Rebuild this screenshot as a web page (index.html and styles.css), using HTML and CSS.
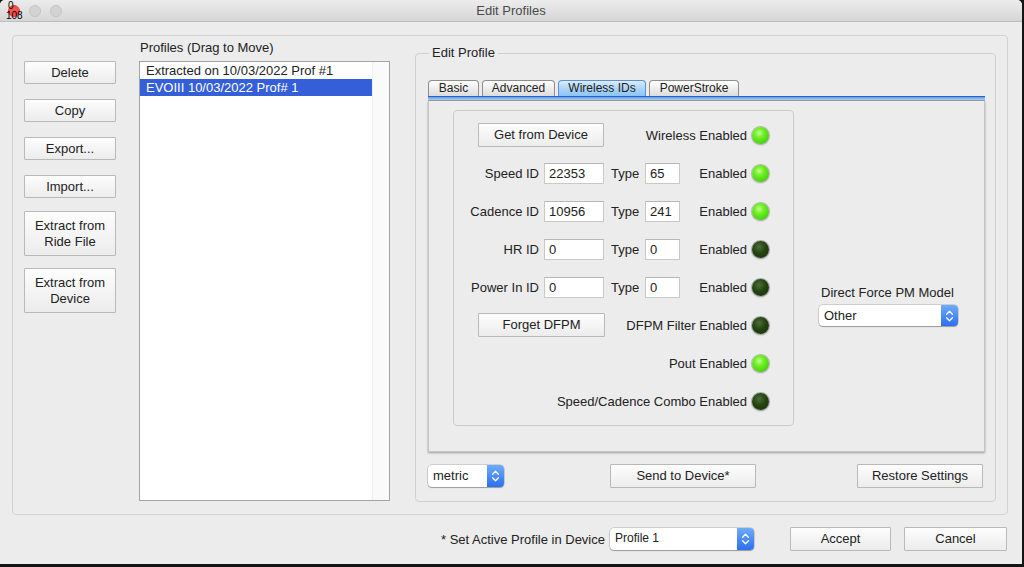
FILE: index.html
```html
<!DOCTYPE html>
<html>
<head>
<meta charset="utf-8">
<title>Edit Profiles</title>
<link rel="stylesheet" href="styles.css">
</head>
<body>
<div class="window">
  <div class="titlebar">
    <div class="lights">
      <span class="light red"></span>
      <span class="light"></span>
      <span class="light"></span>
    </div>
    <div class="title">Edit Profiles</div>
    <div></div>
    <span class="dbg dbg1">0</span>
    <span class="dbg dbg2">108</span>
  </div>
  <div class="content">
    <div class="outer-group">
      <div class="left-col">
        <button class="btn side">Delete</button>
        <button class="btn side">Copy</button>
        <button class="btn side">Export...</button>
        <button class="btn side">Import...</button>
        <button class="btn side tall ride">Extract from<br>Ride File</button>
        <button class="btn side tall dev">Extract from<br>Device</button>
      </div>
      <div class="profiles">
        <div class="profiles-label">Profiles (Drag to Move)</div>
        <div class="list">
          <div class="list-items">
            <div class="item">Extracted on 10/03/2022 Prof #1</div>
            <div class="item selected">EVOIII 10/03/2022 Prof# 1</div>
          </div>
          <div class="scrolltrack"></div>
        </div>
      </div>
      <fieldset class="edit-group">
        <legend>Edit Profile</legend>
        <div class="tabs">
          <div class="tab t-basic">Basic</div>
          <div class="tab t-adv">Advanced</div>
          <div class="tab t-wir active">Wireless IDs</div>
          <div class="tab t-pow">PowerStroke</div>
        </div>
        <div class="tabbar"></div>
        <div class="panel">
          <div class="inner-group">
            <button class="btn wide span12">Get from Device</button>
            <div class="lbl span35">Wireless Enabled</div>
            <span class="led on"></span>

            <div class="lbl">Speed ID</div>
            <div class="field">22353</div>
            <div class="type">Type</div>
            <div class="field">65</div>
            <div class="lbl">Enabled</div>
            <span class="led on"></span>

            <div class="lbl">Cadence ID</div>
            <div class="field">10956</div>
            <div class="type">Type</div>
            <div class="field">241</div>
            <div class="lbl">Enabled</div>
            <span class="led on"></span>

            <div class="lbl">HR ID</div>
            <div class="field">0</div>
            <div class="type">Type</div>
            <div class="field">0</div>
            <div class="lbl">Enabled</div>
            <span class="led off"></span>

            <div class="lbl">Power In ID</div>
            <div class="field">0</div>
            <div class="type">Type</div>
            <div class="field">0</div>
            <div class="lbl">Enabled</div>
            <span class="led off"></span>

            <button class="btn wide span12 forget">Forget DFPM</button>
            <div class="lbl span35">DFPM Filter Enabled</div>
            <span class="led off"></span>

            <div class="lbl span15">Pout Enabled</div>
            <span class="led on"></span>

            <div class="lbl span15">Speed/Cadence Combo Enabled</div>
            <span class="led off"></span>
          </div>
          <div class="dfpm">
            <div class="dfpm-label">Direct Force PM Model</div>
            <div class="popup p-other">
              <span class="popup-text">Other</span>
              <span class="popup-arrows"><svg width="9" height="14" viewBox="0 0 9 14"><path d="M1.6 5.2 L4.5 2.3 L7.4 5.2 M1.6 8.8 L4.5 11.7 L7.4 8.8" stroke="#fff" stroke-width="1.3" fill="none" stroke-linecap="round" stroke-linejoin="round"/></svg></span>
            </div>
          </div>
        </div>
        <div class="edit-bottom">
          <div class="popup p-metric">
            <span class="popup-text">metric</span>
            <span class="popup-arrows"><svg width="9" height="14" viewBox="0 0 9 14"><path d="M1.6 5.2 L4.5 2.3 L7.4 5.2 M1.6 8.8 L4.5 11.7 L7.4 8.8" stroke="#fff" stroke-width="1.3" fill="none" stroke-linecap="round" stroke-linejoin="round"/></svg></span>
          </div>
          <button class="btn send">Send to Device*</button>
          <button class="btn restore">Restore Settings</button>
        </div>
      </fieldset>
    </div>
    <div class="footer">
      <span class="footer-label">* Set Active Profile in Device</span>
      <div class="popup p-profile">
        <span class="popup-text">Profile 1</span>
        <span class="popup-arrows"><svg width="9" height="14" viewBox="0 0 9 14"><path d="M1.6 5.2 L4.5 2.3 L7.4 5.2 M1.6 8.8 L4.5 11.7 L7.4 8.8" stroke="#fff" stroke-width="1.3" fill="none" stroke-linecap="round" stroke-linejoin="round"/></svg></span>
      </div>
      <button class="btn accept">Accept</button>
      <button class="btn cancel">Cancel</button>
    </div>
  </div>
</div>
</body>
</html>
```
FILE: styles.css
```css
* { box-sizing: border-box; }
html, body { margin: 0; height: 100%; }
body {
  background: #141414;
  font-family: "Liberation Sans", Arial, sans-serif;
  font-size: 13px;
  color: #222;
}
.window {
  width: 1022px;
  height: 564px;
  background: #ececec;
  border-radius: 5px 5px 0 0;
  overflow: hidden;
  display: flex;
  flex-direction: column;
}
.titlebar {
  height: 22px;
  flex: none;
  background: linear-gradient(#ececec, #d6d6d6);
  border-bottom: 1px solid #bcbcbc;
  display: grid;
  grid-template-columns: 1fr auto 1fr;
  align-items: center;
  position: relative;
}
.lights { display: flex; gap: 9px; padding-left: 8px; }
.light {
  width: 12px; height: 12px; border-radius: 50%;
  background: #d3d3d3;
  border: 1px solid #c4c4c4;
}
.light.red { background: #f9524c; border-color: #e0443e; }
.title { color: #4a4a4a; font-size: 13px; }
.dbg { position: absolute; font-size: 10px; line-height: 10px; color: #000; }
.dbg1 { left: 8px; top: 1px; }
.dbg2 { left: 6px; top: 11px; }

.content { padding: 13px 15px 0 12px; flex: 1; }
.outer-group {
  width: 996px;
  height: 480px;
  border: 1px solid #d2d2d2;
  border-radius: 4px;
  display: flex;
  align-items: flex-start;
}
.btn {
  font-family: inherit;
  font-size: 13px;
  color: #222;
  height: 23px;
  padding: 0;
  border: 1px solid #b9b9b9;
  border-radius: 1px;
  background: linear-gradient(#fdfdfd, #ececec);
  line-height: 16px;
}
.left-col {
  margin-left: 11px;
  padding-top: 25px;
  display: flex;
  flex-direction: column;
  gap: 15px;
  width: 92px;
}
.side { width: 92px; }
.tall { height: 45px; }
.ride { margin-top: -2px; }
.dev { margin-top: -3px; }

.profiles { margin-left: 23px; padding-top: 4px; }
.profiles-label { height: 16px; line-height: 16px; margin-left: 1px; margin-bottom: 5px; }
.list {
  width: 251px;
  height: 440px;
  border: 1px solid #a3a3a3;
  background: #fff;
  display: flex;
}
.list-items { flex: 1; }
.item { height: 17px; line-height: 17px; padding-left: 6px; white-space: nowrap; }
.item.selected { background: #345fd9; color: #fff; }
.scrolltrack { width: 17px; background: #fafafa; border-left: 1px solid #ededed; }

.edit-group {
  margin: 9px 0 0 25px;
  width: 581px;
  height: 457px;
  border: 1px solid #d0d0d0;
  border-radius: 4px;
  padding: 19px 10px 0 12px;
  min-width: 0;
}
.edit-group legend {
  padding: 0 3px;
  margin-left: 1px;
  line-height: 16px;
  font-size: 13px;
}
.tabs { display: flex; gap: 3px; height: 16px; align-items: flex-end; }
.tab {
  height: 16px;
  font-size: 12px;
  line-height: 15px;
  text-align: center;
  border: 1px solid #8e8e8e;
  border-bottom: none;
  border-radius: 4px 4px 0 0;
  background: linear-gradient(#ffffff, #dcdcdc);
  color: #222;
}
.t-basic { width: 51px; }
.t-adv { width: 73px; }
.t-wir { width: 88px; }
.t-pow { width: 90px; }
.tab.active {
  background: linear-gradient(#d9ecfc, #a9d3f8 55%, #8dc4f6);
  border-color: #5d8ed2;
}
.tabbar {
  height: 5px;
  border-top: 1px solid #2d5fc4;
  background: linear-gradient(#5f9fe8, #a8cff4);
  border-bottom: 1px solid #9c9c9c;
}
.panel {
  height: 351px;
  background: #ececec;
  border: 1px solid #c4c4c4;
  border-top: none;
  box-shadow: 0 1px 2px rgba(0,0,0,0.35);
  padding: 9px 0 0 24px;
  display: flex;
  align-items: flex-start;
}
.inner-group {
  width: 341px;
  height: 316px;
  border: 1px solid #cbcbcb;
  border-radius: 4px;
  padding: 5px 25px 0 0;
  display: grid;
  grid-template-columns: 85px 60px 31px 35px 1fr 16px;
  grid-auto-rows: 38px;
  column-gap: 5px;
  align-items: center;
}
.lbl { text-align: right; white-space: nowrap; }
.span12 { grid-column: 1 / 3; }
.span35 { grid-column: 3 / 6; }
.span15 { grid-column: 1 / 6; }
.wide { width: 126px; height: 24px; justify-self: end; }
.forget { width: 127px; justify-self: end; margin-right: -1px; }
.type { padding-left: 2px; }
.field {
  height: 21px;
  line-height: 20px;
  background: #fff;
  border: 1px solid #c9c9c9;
  border-top-color: #b7b7b7;
  padding-left: 4px;
}
.led {
  width: 17px; height: 17px; border-radius: 50%;
  display: block;
  box-shadow: 0 0 0 1px #b5b5b5, 0 1px 2px rgba(0,0,0,0.3);
}
.led.on { background: radial-gradient(circle at 42% 35%, #c4ff90 0, #72f02a 30%, #4ed811 65%, #39b806 100%); }
.led.off { background: radial-gradient(circle at 42% 35%, #4d6e3a 0, #23430f 45%, #16300a 100%); box-shadow: 0 0 0 1px #a8a8a8, 0 1px 2px rgba(0,0,0,0.35); }

.dfpm { margin: 175px 0 0 25px; }
.dfpm-label { line-height: 16px; height: 16px; padding-left: 2px; margin-bottom: 4px; }
.popup {
  display: flex;
  height: 22px;
  background: #fff;
  border-radius: 4px;
  box-shadow: 0 0 0 0.5px rgba(0,0,0,0.25), 0 1px 1px rgba(0,0,0,0.25);
  overflow: hidden;
}
.popup-text { flex: 1; padding-left: 5px; line-height: 21px; white-space: nowrap; }
.popup-arrows {
  width: 17px;
  background: linear-gradient(#6eacfb, #2d6ff0);
  display: flex;
  align-items: center;
  justify-content: center;
}
.p-other { width: 139px; height: 21px; }
.p-metric { width: 76px; }
.p-profile { width: 144px; font-size: 12px; margin-left: 5px; }

.edit-bottom {
  margin-top: 12px;
  display: flex;
  align-items: center;
}
.send { width: 146px; margin-left: 106px; height: 24px; }
.restore { width: 126px; margin-left: auto; margin-right: 2px; height: 24px; }

.footer {
  margin-top: 12px;
  display: flex;
  align-items: center;
  justify-content: flex-end;
  height: 24px;
}
.accept { width: 101px; height: 24px; margin-left: 36px; }
.cancel { width: 103px; height: 24px; margin-left: 13px; }
```
